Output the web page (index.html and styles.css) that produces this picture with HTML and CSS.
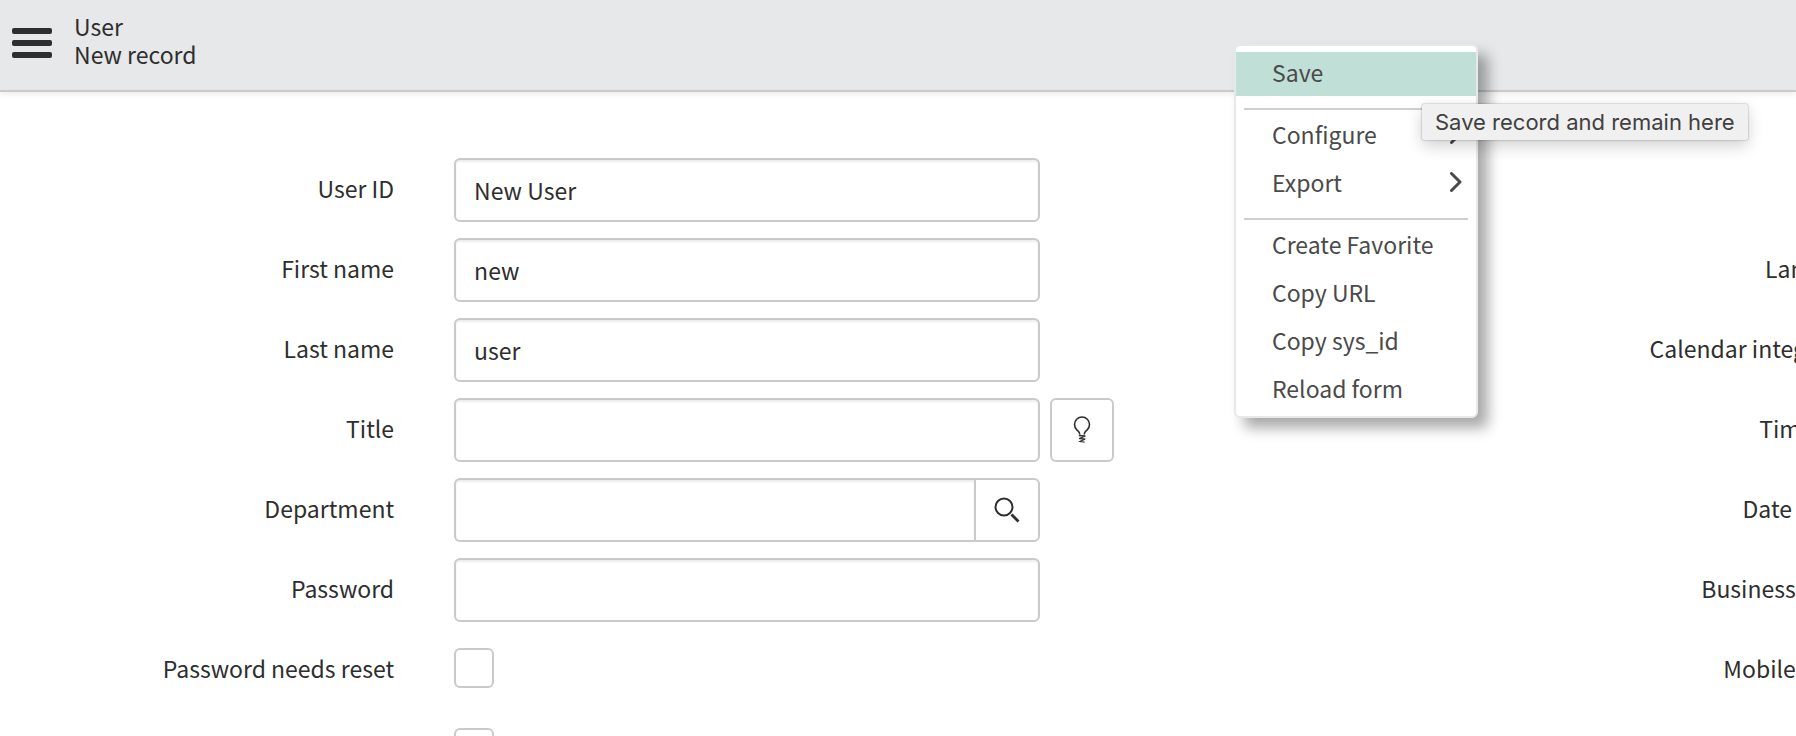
FILE: index.html
```html
<!DOCTYPE html>
<html lang="en">
<head>
<meta charset="utf-8">
<title>User | New record</title>
<link rel="stylesheet" href="styles.css">
</head>
<body>
<header class="header">
  <button class="menu-button" type="button" aria-label="Additional actions">
    <svg width="40" height="30" viewBox="0 0 40 30" aria-hidden="true"><rect width="40" height="6" rx="2"/><rect y="12" width="40" height="6" rx="2"/><rect y="24" width="40" height="6" rx="2"/></svg>
  </button>
  <h1 class="title"><span>User</span><span>New record</span></h1>
</header>

<form class="form">
  <div class="section">
    <div class="row"><label class="label" for="user-id">User ID</label><input class="input" id="user-id" type="text" value="New User"></div>
    <div class="row"><label class="label" for="first-name">First name</label><input class="input" id="first-name" type="text" value="new"></div>
    <div class="row"><label class="label" for="last-name">Last name</label><input class="input" id="last-name" type="text" value="user"></div>
    <div class="row"><label class="label" for="job-title">Title</label><input class="input" id="job-title" type="text">
      <button class="icon-button" type="button" aria-label="Suggestions">
        <svg width="18" height="28" viewBox="0 0 18 28" fill="none" stroke="currentColor" aria-hidden="true"><path d="M6.800 18.500c0-2.400-1.400-3.200-3-4.600A7.500 7.500 0 1 1 14.200 13.900c-1.600 1.400-3 2.200-3 4.600" stroke-width="1.600"/><path d="M5.800 19.500l6.600.5-6.200 2.700 6 .2-5 2.500 4.400.7" stroke-width="1.300"/></svg>
      </button>
    </div>
    <div class="row"><label class="label" for="department">Department</label>
      <div class="lookup"><input class="input lookup-input" id="department" type="text">
        <button class="icon-button lookup-button" type="button" aria-label="Look up department">
          <svg width="26" height="26" viewBox="0 0 26 26" fill="none" stroke="currentColor" aria-hidden="true"><circle cx="10" cy="10" r="8.500" stroke-width="2"/><path d="M17.500 17.500l7 7" stroke-width="2.800"/></svg>
        </button>
      </div>
    </div>
    <div class="row"><label class="label" for="password">Password</label><input class="input" id="password" type="password"></div>
    <div class="row"><label class="label" for="reset">Password needs reset</label><input class="checkbox" id="reset" type="checkbox"></div>
    <div class="row"><label class="label" for="locked">Locked out</label><input class="checkbox" id="locked" type="checkbox"></div>
  </div>
  <div class="section">
    <div class="row"></div>
    <div class="row"><label class="label" for="language">Language</label><input class="input" id="language" type="text"></div>
    <div class="row"><label class="label" for="calendar">Calendar integration</label><input class="input" id="calendar" type="text"></div>
    <div class="row"><label class="label" for="zone">Time zone</label><input class="input" id="zone" type="text"></div>
    <div class="row"><label class="label" for="date">Date format</label><input class="input" id="date" type="text"></div>
    <div class="row"><label class="label" for="business">Business phone</label><input class="input" id="business" type="text"></div>
    <div class="row"><label class="label" for="mobile">Mobile phone</label><input class="input" id="mobile" type="text"></div>
  </div>
</form>

<div class="menu" role="menu">
  <button class="item item-active" type="button" role="menuitem" aria-describedby="save-tip">Save</button>
  <hr class="divider">
  <button class="item" type="button" role="menuitem">Configure
    <svg class="chevron" width="12" height="20" viewBox="0 0 12 20" aria-hidden="true"><path d="M1.500 1.500L10 10l-8.500 8.500"/></svg>
  </button>
  <button class="item" type="button" role="menuitem">Export
    <svg class="chevron" width="12" height="20" viewBox="0 0 12 20" aria-hidden="true"><path d="M1.500 1.500L10 10l-8.500 8.500"/></svg>
  </button>
  <hr class="divider">
  <button class="item" type="button" role="menuitem">Create Favorite</button>
  <button class="item" type="button" role="menuitem">Copy URL</button>
  <button class="item" type="button" role="menuitem">Copy sys_id</button>
  <button class="item" type="button" role="menuitem">Reload form</button>
</div>
<div class="tooltip" role="tooltip" id="save-tip">Save record and remain here</div>
</body>
</html>
```
FILE: styles.css
```css
* { box-sizing: border-box; }

body {
  margin: 0;
  min-height: 100vh;
  overflow: hidden;
  background: #fff;
  color: #2e2e2e;
  font: 23px/28px "Noto Sans CJK SC", sans-serif;
}

button, input { font: inherit; color: inherit; margin: 0; }
button { padding: 0; border: 0; background: none; }

.header {
  display: flex;
  align-items: center;
  gap: 22px;
  padding: 12px 12px 22px;
  background: #e6e8ea;
  border-bottom: 2px solid #cacaca;
  box-shadow: 0 2px 6px rgba(0, 0, 0, .08);
}

.menu-button { display: flex; padding-top: 6px; }
.title { display: flex; flex-direction: column; margin: 0; font-size: 23px; font-weight: 400; }

.form { display: flex; padding-top: 66px; }
.section {
  flex: 0 0 calc(82vw + 3px);
  display: flex;
  flex-direction: column;
  gap: 16px;
}
.row { display: flex; align-items: center; min-height: 64px; }
.label {
  width: calc(22vw - 1px);
  margin-right: 60px;
  padding-bottom: 4px;
  text-align: right;
  white-space: nowrap;
}

.input {
  width: calc(33vw - 7px);
  height: 64px;
  padding: 0 18px;
  border: 2px solid #cacaca;
  border-radius: 6px;
  background: #fff;
  box-shadow: inset 0 2px 2px rgba(0, 0, 0, .07);
  outline: 0;
}

.icon-button {
  display: flex;
  align-items: center;
  justify-content: center;
  width: 64px;
  height: 64px;
  margin-left: 10px;
  border: 2px solid #cacaca;
  border-radius: 6px;
  background: #fff;
}

.lookup { display: flex; width: calc(33vw - 7px); }
.lookup-input { flex: 1; min-width: 0; border-right: 0; border-radius: 6px 0 0 6px; }
.lookup-button { width: 66px; margin-left: 0; border-radius: 0 6px 6px 0; }

.checkbox {
  appearance: none;
  width: 40px;
  height: 40px;
  margin-bottom: 4px;
  border: 2px solid #cacaca;
  border-radius: 6px;
  background: #fff;
}

.menu {
  position: absolute;
  top: 44px;
  left: 1234px;
  display: flex;
  flex-direction: column;
  gap: 4px;
  width: 244px;
  padding: 6px 0 4px;
  border: 2px solid #e6e8ea;
  border-radius: 6px;
  background: #fff;
  background-clip: padding-box;
  box-shadow: 10px 10px 14px rgba(0, 0, 0, .34);
  color: #4a4a4a;
}
.item {
  display: flex;
  align-items: center;
  justify-content: space-between;
  height: 44px;
  padding: 0 14px 4px 36px;
}
.item-active { background: #c0dfd6; }
.divider { width: 224px; height: 2px; margin: 8px auto 0; border: 0; background: #d0d0d0; }
.chevron { fill: none; stroke: #4a4a4a; stroke-width: 3; stroke-linecap: round; stroke-linejoin: round; }
.menu-button svg { fill: #2e2e2e; }

.tooltip {
  position: absolute;
  top: 104px;
  left: 1422px;
  padding: 4px 13px;
  border-radius: 2px;
  background: #f0f0f0;
  box-shadow: 0 0 2px rgba(0, 0, 0, .4), 0 6px 16px rgba(0, 0, 0, .18);
  color: #404040;
  font: 22px/28px Inter, sans-serif;
  white-space: nowrap;
}
```
